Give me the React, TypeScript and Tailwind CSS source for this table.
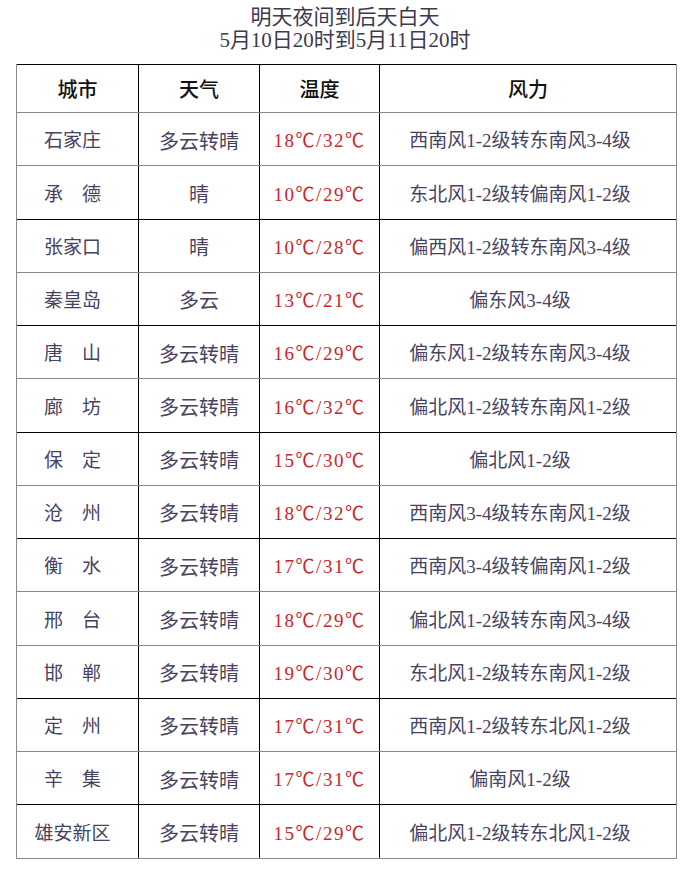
const rows = [
  { city: '石家庄', weather: '多云转晴', temp: '18℃/32℃', wind: '西南风1-2级转东南风3-4级', line: 'grey' },
  { city: '承　德', weather: '晴', temp: '10℃/29℃', wind: '东北风1-2级转偏南风1-2级', line: 'grey' },
  { city: '张家口', weather: '晴', temp: '10℃/28℃', wind: '偏西风1-2级转东南风3-4级', line: 'black' },
  { city: '秦皇岛', weather: '多云', temp: '13℃/21℃', wind: '偏东风3-4级', line: 'grey' },
  { city: '唐　山', weather: '多云转晴', temp: '16℃/29℃', wind: '偏东风1-2级转东南风3-4级', line: 'black' },
  { city: '廊　坊', weather: '多云转晴', temp: '16℃/32℃', wind: '偏北风1-2级转东南风1-2级', line: 'grey' },
  { city: '保　定', weather: '多云转晴', temp: '15℃/30℃', wind: '偏北风1-2级', line: 'black' },
  { city: '沧　州', weather: '多云转晴', temp: '18℃/32℃', wind: '西南风3-4级转东南风1-2级', line: 'grey' },
  { city: '衡　水', weather: '多云转晴', temp: '17℃/31℃', wind: '西南风3-4级转偏南风1-2级', line: 'black' },
  { city: '邢　台', weather: '多云转晴', temp: '18℃/29℃', wind: '偏北风1-2级转东南风3-4级', line: 'grey' },
  { city: '邯　郸', weather: '多云转晴', temp: '19℃/30℃', wind: '东北风1-2级转东南风1-2级', line: 'grey' },
  { city: '定　州', weather: '多云转晴', temp: '17℃/31℃', wind: '西南风1-2级转东北风1-2级', line: 'black' },
  { city: '辛　集', weather: '多云转晴', temp: '17℃/31℃', wind: '偏南风1-2级', line: 'grey' },
  { city: '雄安新区', weather: '多云转晴', temp: '15℃/29℃', wind: '偏北风1-2级转东北风1-2级', line: 'black' },
];

const font = { fontFamily: '"Liberation Serif", "Noto Sans CJK SC", serif' };

export default function App() {
  return (
    <div className="w-[690px] h-[892px] bg-white overflow-hidden" style={font}>
      {/* title */}
      <div className="pt-[6px] text-center text-[21px] leading-[23px] text-[#3c3a4e]">
        <div>明天夜间到后天白天</div>
        <div>5月10日20时到5月11日20时</div>
      </div>

      <div className="mt-[12px] ml-[16px] w-[661px] border-x border-b border-[#8a8a8a]">
        {/* header */}
        <div className="flex h-[48px] border-t border-black text-[20px] text-[#111] font-medium">
          <div className="w-[121px] flex items-center justify-center pt-[2px]">城市</div>
          <div className="w-[121px] border-l border-black flex items-center justify-center pt-[2px]">天气</div>
          <div className="w-[120px] border-l border-black flex items-center justify-center pt-[2px]">温度</div>
          <div className="flex-1 border-l border-black flex items-center justify-center pt-[2px]">风力</div>
        </div>

        {rows.map((r, i) => (
          <div
            key={i}
            className={
              'flex h-[53.25px] border-t text-[#47435e] ' +
              (r.line === 'black' ? 'border-black' : 'border-[#8a8a8a]')
            }
          >
            <div className="w-[121px] flex items-center justify-center pt-[5px] pr-[10px] text-[19px]">{r.city}</div>
            <div className="w-[121px] border-l border-black flex items-center justify-center pt-[5px] text-[20px]">
              {r.weather}
            </div>
            <div className="w-[120px] border-l border-black flex items-center justify-center pt-[5px] text-[19px] tracking-[1.5px] text-[#c8262c]">
              {r.temp}
            </div>
            <div className="flex-1 border-l border-black flex items-center justify-center pt-[5px] pr-[16px] text-[19px]">
              {r.wind}
            </div>
          </div>
        ))}
      </div>
    </div>
  );
}
